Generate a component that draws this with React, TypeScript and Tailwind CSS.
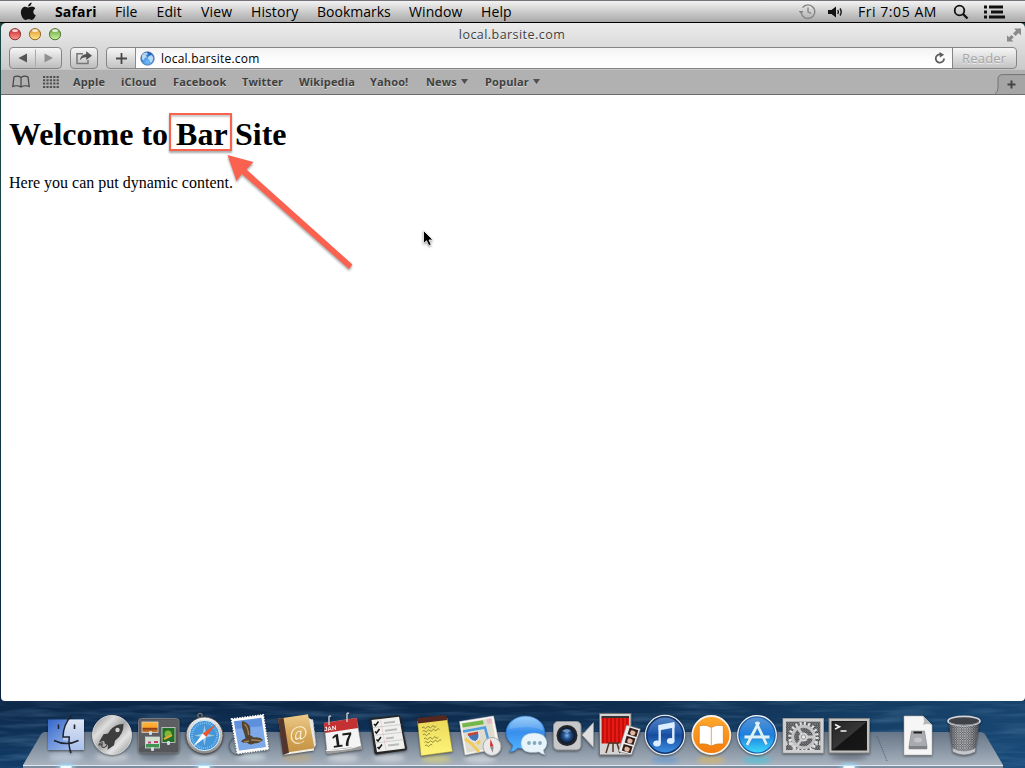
import type { ReactNode } from "react";

const MENUS: { label: string; cls: string }[] = [
  { label: "Safari", cls: "w-[60px] font-bold tracking-[0.15px]" },
  { label: "File", cls: "w-[41.5px] tracking-[0.1px]" },
  { label: "Edit", cls: "w-[44.5px] tracking-[0.1px]" },
  { label: "View", cls: "w-[50px] tracking-[0.2px]" },
  { label: "History", cls: "w-[66px] tracking-[0.1px]" },
  { label: "Bookmarks", cls: "w-[92px]" },
  { label: "Window", cls: "w-[72px] tracking-[0.1px]" },
  { label: "Help", cls: "w-[40px] tracking-[0.1px]" },
];

const BOOKMARKS: { label: string; cls: string; menu?: boolean }[] = [
  { label: "Apple", cls: "w-[48px]" },
  { label: "iCloud", cls: "w-[52px]" },
  { label: "Facebook", cls: "w-[69px]" },
  { label: "Twitter", cls: "w-[57px]" },
  { label: "Wikipedia", cls: "w-[71px]" },
  { label: "Yahoo!", cls: "w-[56px]" },
  { label: "News", cls: "w-[59px]", menu: true },
  { label: "Popular", cls: "w-[60px]", menu: true },
];

function MenuBar() {
  return (
    <header className="flex h-[23px] shrink-0 items-center border-t border-b border-t-[#77727a] border-b-black bg-linear-to-b from-[#f3f3f3] to-[#a9a9a9] text-[14px] leading-[20px] text-black">
      <svg className="ml-[20px] mr-[18px] h-[19px] w-[17px]" viewBox="0 0 17 19">
        <path d="M11.6 0.5c.2 1.9-1.4 4-3.5 4.1C7.900 2.700 9.700.7 11.600.5zM8.500 5.600c.7 0 1.900-1 3.500-1 1.300 0 2.500.7 3.300 1.800-2.900 1.700-2.400 5.700.5 6.900-.9 2.400-2.500 4.700-4.100 4.700-1.200 0-1.600-.7-3-.7s-1.900.7-3 .7C3.300 18 .9 14 .9 10.300c0-3.600 2.300-5.600 4.500-5.600 1.400 0 2.400.9 3.100.9z" fill="#151515" />
      </svg>
      <nav className="flex">
        {MENUS.map((m) => (
          <span key={m.label} className={m.cls}>{m.label}</span>
        ))}
      </nav>
      <div className="ml-auto flex items-center">
        <svg className="mr-[12px] size-[17px]" viewBox="0 0 17 17" fill="none" stroke="#858585" strokeWidth="1.4">
          <path d="M2.200 9.500A6.800 6.800 0 1 0 3.500 4.600M9 4.500v4.300l3 1.600" />
          <path d="M-.2 8h4.800L2.200 11z" fill="#858585" stroke="none" />
        </svg>
        <svg className="mr-[14px] h-[14px] w-[16px]" viewBox="0 0 16 14">
          <path d="M0 5h3.500L8 1.500v11L3.500 9H0z" fill="#111" />
          <path d="M9.800 5q1.200 2 0 4M12 3.500q2.400 3.500 0 7" fill="none" stroke="#111" strokeWidth="1.400" />
        </svg>
        <span className="w-[95px] tracking-[0.55px]">Fri 7:05 AM</span>
        <svg className="mr-[15px] size-[16px]" viewBox="0 0 16 16" fill="none" stroke="#111">
          <circle cx="6.500" cy="6.500" r="4.800" strokeWidth="1.800" />
          <path d="M10 10l4.500 4.500" strokeWidth="2.400" />
        </svg>
        <svg className="mr-[20px] h-[14px] w-[21px]" viewBox="0 0 21 14" fill="none" stroke="#111" strokeWidth="2.800">
          <path d="M0 2h3M5 2h14M0 7h3M7 7h12M0 12h3M5 12h16" />
        </svg>
      </div>
    </header>
  );
}

function TrafficLights() {
  const colors = [
    { rim: "#8d3230", top: "#c3242b", bottom: "#ff9a90" },
    { rim: "#96652a", top: "#df932b", bottom: "#ffe98b" },
    { rim: "#4d7635", top: "#64a440", bottom: "#ccf49b" },
  ];
  return (
    <svg className="mb-[2px] h-[14px] w-[54px]" viewBox="0 0 54 14">
      <defs>
        {colors.map((c, i) => (
          <linearGradient key={c.rim} id={`light${i}`} x2="0" y2="1">
            <stop stopColor={c.top} />
            <stop offset="1" stopColor={c.bottom} />
          </linearGradient>
        ))}
      </defs>
      {colors.map((c, i) => (
        <g key={c.rim}>
          <circle cx={7 + i * 20} cy="7.200" r="5.600" fill={`url(#light${i})`} stroke={c.rim} />
          <ellipse cx={7 + i * 20} cy="3.700" rx="3" ry="1.400" fill="#fff" opacity=".8" />
        </g>
      ))}
    </svg>
  );
}

function BrowserChrome() {
  return (
    <div className="flex h-[72px] shrink-0 flex-col rounded-t-[5px] border-b border-[#6c6c6c] bg-linear-to-b from-[#ececec] via-[#cdcdcd] via-60% to-[#adadad]">
      <div className="grid h-[24px] grid-cols-[1fr_auto_1fr] items-center pl-[7px] pr-[9px]">
        <TrafficLights />
        <span className="text-[12.500px] tracking-[0.45px] text-[#3f3f3f] [text-shadow:0_1px_0_#fff8]">local.barsite.com</span>
        <svg className="mr-[-6px] size-[16px] justify-self-end" viewBox="0 0 16 16" fill="#8a8a8a">
          <path d="M8 1.500h7v7l-2.400-2.400-3 3L7 6.500l3-3zM1 8.300l2 2 2.500-2.400 2.300 2.300L5.400 12.600l2 2H1z" />
        </svg>
      </div>
      <div className="flex h-[22px] items-stretch pr-[8px] pl-[8px]">
        <div className="flex w-[53px] items-center rounded-[4px] border border-[#858585] bg-linear-to-b from-[#f6f6f6] to-[#bdbdbd]">
          <svg className="h-[20px] w-[51px]" viewBox="0 0 51 20">
            <path d="M17 5.500v9L8.500 10z" fill="#555" />
            <path d="M34.500 5.500v9L43 10z" fill="#909090" />
            <path d="M25.500 1.500v17" stroke="#a9a9a9" />
          </svg>
        </div>
        <div className="ml-[8px] flex w-[28px] items-center justify-center rounded-[4px] border border-[#858585] bg-linear-to-b from-[#f6f6f6] to-[#bdbdbd]">
          <svg className="h-[16px] w-[18px]" viewBox="0 0 18 16">
            <path d="M8 3.700H2v9.800h11V10" fill="none" stroke="#777" strokeWidth="1.500" />
            <path d="M4.800 10.500C5.500 6 8 4.300 11.200 4.200V1.200L17 5.700l-5.800 4.400V7.200C8.500 7.100 6.500 8 4.800 10.500z" fill="#555" />
          </svg>
        </div>
        <div className="ml-[8px] flex flex-1 overflow-hidden rounded-[4px] border border-[#858585] bg-linear-to-b from-[#f6f6f6] to-[#c3c3c3]">
          <div className="flex w-[29px] items-center justify-center border-r border-[#8b8b8b]">
            <svg className="size-[11px]" viewBox="0 0 11 11"><path d="M5.500 0v11M0 5.500h11" stroke="#484848" strokeWidth="1.800" /></svg>
          </div>
          <div className="flex flex-1 items-center bg-linear-to-b from-[#f3f3f3] via-[#fdfdfd] via-60% to-white pl-[4px]">
            <svg className="size-[15px]" viewBox="0 0 15 15">
              <defs>
                <radialGradient id="globe" cx=".5" cy=".75" r=".7"><stop stopColor="#75c2ff" /><stop offset="1" stopColor="#1659b2" /></radialGradient>
              </defs>
              <circle cx="7.500" cy="7.500" r="6.800" fill="url(#globe)" stroke="#4d739f" strokeWidth=".6" />
              <path d="M2 4q2-3 5-2.500L8 3 6 4.500l1 1.700-2.500 1L4 9.500 1.800 8zM9 5l3-1 1.500 3-1 3-2 2-1-3-2-1.500z" fill="#d5edfd" opacity=".8" />
            </svg>
            <span className="ml-[6px] mt-px text-[12px] leading-[18px] tracking-[0.22px] text-black">local.barsite.com</span>
            <svg className="ml-auto mr-[6px] size-[12px]" viewBox="0 0 13 13">
              <path d="M10.900 7A4.500 4.500 0 1 1 6.800 2.600" fill="none" stroke="#5c5c5c" strokeWidth="1.900" />
              <path d="M6 0l5 3-4.700 3z" fill="#5c5c5c" />
            </svg>
          </div>
          <div className="w-[64px] border-l border-[#858585] pl-[9px] text-[13px] leading-[20px] tracking-[0.2px] text-[#a6a6a6] [text-shadow:0_1px_0_#fff9]">Reader</div>
        </div>
      </div>
      <div className="flex h-[25px] items-center border-t border-[#c6c6c6] bg-[#b1b1b1] text-[11px] font-bold leading-[16px] tracking-[0.15px] text-[#404040] [text-shadow:0_1px_0_#fff7]">
        <svg className="ml-[11px] mr-[13px] h-[14px] w-[18px]" viewBox="0 0 18 14" fill="none" stroke="#444" strokeWidth="1.200">
          <path d="M9 2.500Q5.500.2 2 2L.8 11.500Q5 9.800 9 12q4-2.200 8.200-.5L16 2q-3.500-1.800-7 .5V12" />
        </svg>
        <svg className="mr-[14px] h-[12px] w-[16px]" viewBox="0 0 16 12" stroke="#505050" strokeWidth="2">
          <path d="M0 1h16M0 4.300h16M0 7.600h16M0 10.900h16" strokeDasharray="2.200 1.200" />
        </svg>
        {BOOKMARKS.map((b) => (
          <span key={b.label} className={`flex items-center ${b.cls}`}>
            {b.label}
            {b.menu && <svg className="ml-[4px] mb-px h-[5px] w-[7px]" viewBox="0 0 7 5"><path d="M0 0h7L3.500 5z" fill="#505050" /></svg>}
          </span>
        ))}
        <svg className="ml-auto h-[20px] w-[31px] self-end" viewBox="0 0 31 20">
          <path d="M1 19.500Q4 18 4 14V5Q4 .6 9 .6H31V20H1z" fill="#a5a5a5" />
          <path d="M1 19.500Q4 18 4 14V5Q4 .6 9 .6H31" fill="none" stroke="#747474" />
          <path d="M17.500 6.500v8M13.500 10.500h8" stroke="#444" strokeWidth="2" />
        </svg>
      </div>
    </div>
  );
}

function Page() {
  return (
    <main className="relative flex-1 rounded-b-[4px] bg-white pl-[8px] pt-[21px] text-black [font-family:'Liberation_Serif','Times_New_Roman',serif]">
      <h1 className="text-[32px] font-bold leading-[37px]">Welcome to Bar Site</h1>
      <p className="mt-[21px] text-[16px] leading-[18px]">Here you can put dynamic content.</p>
      <div className="absolute left-[168px] top-[18px] h-[38px] w-[63px] border-2 border-[#f86350] shadow-[0_2px_2px_#0005,inset_0_2px_2px_#0003]" />
      <svg className="absolute left-[219px] top-[51px] h-[135px] w-[145px] drop-shadow-[0_2px_1px_#0005]" viewBox="220 146 145 135">
        <path d="M227.500 155l26 7-7 7.500 106 95-3.500 4.500-107-95-5.500 7z" fill="#fa614f" />
      </svg>
      <svg className="absolute left-[421px] top-[134px] h-[20px] w-[14px] drop-shadow-[0_1px_1px_#0006]" viewBox="0 0 14 20">
        <path d="M1.500 1.500v13l3-2.800 2.300 5 2.400-1.100L7 11h4z" fill="#000" stroke="#fff" strokeWidth=".8" />
      </svg>
    </main>
  );
}

function Cell({ children }: { children: ReactNode }) {
  return <svg className="h-[46px] w-[46px] shrink-0 overflow-visible drop-shadow-[0_1px_1px_#0007]" viewBox="0 0 46 46">{children}</svg>;
}

function Gradients() {
  return (
    <svg className="absolute size-0">
      <defs>
        <linearGradient id="finder" x2="1" y2="1"><stop stopColor="#3567c9" /><stop offset="1" stopColor="#b7cdf5" /></linearGradient>
        <linearGradient id="finderR" x2="0" y2="1"><stop stopColor="#dfe5f3" /><stop offset="1" stopColor="#a9c0ec" /></linearGradient>
        <linearGradient id="silver" x2="1" y2="1"><stop stopColor="#7c7c7c" /><stop offset=".3" stopColor="#dedede" /><stop offset=".5" stopColor="#a5a5a5" /><stop offset=".7" stopColor="#e3e3e3" /><stop offset="1" stopColor="#888" /></linearGradient>
        <linearGradient id="chrome" x2="0" y2="1"><stop stopColor="#f4f4f4" /><stop offset="1" stopColor="#898989" /></linearGradient>
        <linearGradient id="blue" x2="0" y2="1"><stop stopColor="#5a87c4" /><stop offset=".45" stopColor="#1f58ac" /><stop offset=".5" stopColor="#164a9c" /><stop offset="1" stopColor="#3f97ec" /></linearGradient>
        <linearGradient id="store" x2="0" y2="1"><stop stopColor="#5d94d0" /><stop offset=".5" stopColor="#1b7fdf" /><stop offset="1" stopColor="#3fe0ff" /></linearGradient>
        <linearGradient id="orange" x2="0" y2="1"><stop stopColor="#ffa92d" /><stop offset="1" stopColor="#f37b0c" /></linearGradient>
        <linearGradient id="bubble" x2="0" y2="1"><stop stopColor="#8bc7fc" /><stop offset=".45" stopColor="#388eec" /><stop offset="1" stopColor="#56b6ff" /></linearGradient>
        <linearGradient id="tan" x2="0" y2="1"><stop stopColor="#eccb8b" /><stop offset=".5" stopColor="#d7a95a" /><stop offset="1" stopColor="#c39245" /></linearGradient>
        <linearGradient id="yellow" x2="0" y2="1"><stop stopColor="#ead857" /><stop offset="1" stopColor="#fff57b" /></linearGradient>
        <linearGradient id="red" x2="2" y2="0" gradientUnits="userSpaceOnUse" spreadMethod="reflect"><stop stopColor="#b90505" /><stop offset="1" stopColor="#f2241c" /></linearGradient>
        <linearGradient id="sunset" x2="0" y2="1"><stop stopColor="#fbb638" /><stop offset=".5" stopColor="#ffa52a" /><stop offset=".6" stopColor="#8c3d15" /><stop offset="1" stopColor="#d38431" /></linearGradient>
        <linearGradient id="screen" x2="1" y2="1"><stop stopColor="#242424" /><stop offset=".5" stopColor="#363636" /><stop offset=".52" stopColor="#141414" /><stop offset="1" stopColor="#181818" /></linearGradient>
        <linearGradient id="basket" x2="1" y2="0"><stop stopColor="#17191d" stopOpacity=".6" /><stop offset=".45" stopColor="#fff" stopOpacity=".15" /><stop offset="1" stopColor="#17191d" stopOpacity=".6" /></linearGradient>
        <radialGradient id="lens"><stop stopColor="#81b6ec" /><stop offset=".45" stopColor="#24528e" /><stop offset="1" stopColor="#0a172d" /></radialGradient>
        <pattern id="mesh" width="2.400" height="2.400" patternUnits="userSpaceOnUse"><rect width="2.400" height="2.400" fill="#3b3d40" /><path d="M0 0l2.400 2.400M2.400 0L0 2.400" stroke="#b4b7bb" strokeWidth=".65" /></pattern>
        <clipPath id="panel"><rect x="7" y="9.500" width="34.500" height="28.500" /></clipPath>
      </defs>
    </svg>
  );
}

function Finder() {
  return (
    <Cell>
      <rect x="5" y="7.500" width="36" height="30.500" fill="url(#finder)" />
      <path d="M25 7.500h16v30.500H26.500q-1-4-.8-9.500H20q0-13 5-21z" fill="url(#finderR)" />
      <path d="M28.500 3.500Q20 13 20 25h6.200q-.8 10 1.800 16" fill="none" stroke="#20242f" strokeWidth="1.500" />
      <path d="M11 28.500q12.500 6 24.500 0" fill="none" stroke="#20242f" strokeWidth="1.500" />
      <path d="M15.500 12.500v4.500M31.500 12.500v4.500" stroke="#20242f" strokeWidth="1.600" />
    </Cell>
  );
}

function Launchpad() {
  return (
    <Cell>
      <circle cx="23" cy="23" r="19.500" fill="url(#silver)" stroke="#d7d7d7" />
      <path d="M34.500 12q-8-.5-13.500 6.500l-2 3-4.500.8-4.500 8 5-1.500 1 3 3 1.500-.5 4.500 6.500-4.500 1-4.500Q35 22 34.500 12z" fill="#3e3e3e" />
      <circle cx="28.500" cy="18" r="2.200" fill="#d0d0d0" />
      <path d="M14 31q-4-.5-4 2l3-.5q-1 3 2 3 2-.5 3-2.500" fill="none" stroke="#444" strokeWidth="1.200" />
    </Cell>
  );
}

function MissionControl() {
  return (
    <Cell>
      <rect x="3.500" y="6.500" width="40.500" height="34.500" rx="3" fill="#55565a" stroke="#77787c" />
      <path d="M4 8h39v8L4 36z" fill="#fff" opacity=".05" />
      <g stroke="#d3d3d3" strokeWidth=".8">
        <rect x="7" y="10" width="16" height="10.500" fill="url(#sunset)" />
        <rect x="27" y="15.500" width="13" height="15" fill="#236f27" />
        <rect x="10.500" y="25" width="14" height="11" fill="#cfe0cc" />
      </g>
      <circle cx="33" cy="22" r="3.500" fill="#82b839" />
      <path d="M29 27l8-4" stroke="#e5a735" strokeWidth="2" />
      <path d="M11 32h13v3.500H11z" fill="#3c9551" />
      <path d="M13 30.500h3M19 30h4" stroke="#c03c83" strokeWidth="1.800" fill="none" />
      <g fill="#ccdde9"><rect x="14" y="19" width="3" height="4" rx="1" /><rect x="32" y="29" width="3" height="4" rx="1" /><rect x="16" y="35" width="3" height="4" rx="1" /></g>
    </Cell>
  );
}

function SafariIcon() {
  return (
    <Cell>
      <circle cx="19" cy="3.500" r="2.200" fill="none" stroke="#777" strokeWidth="1.200" />
      <circle cx="23.500" cy="23.500" r="18.500" fill="url(#chrome)" stroke="#4d4d4d" strokeWidth=".9" />
      <circle cx="23.500" cy="23.500" r="15.200" fill="#4397da" stroke="#e6eef4" />
      <circle cx="23.500" cy="23.500" r="12.500" fill="none" stroke="#cceaff" strokeWidth="2" strokeDasharray=".5 1.500" opacity=".8" />
      <path d="M23.500 12l2 9.500L35 23.500l-9.500 2L23.500 35l-2-9.500L12 23.500l9.500-2z" fill="#9fcdf0" stroke="#3d7fad" strokeWidth=".4" />
      <path d="M35 12L21.700 21.500l3.400 3.500z" fill="#ed5628" />
      <path d="M12 34.500l13-9.500-3.300-3.500z" fill="#fff" />
    </Cell>
  );
}

function Mail() {
  return (
    <Cell>
      <circle cx="11" cy="34" r="9" fill="none" stroke="#28384d" strokeWidth="1.500" opacity=".35" />
      <path d="M4.500 7L36.300 2.800 41.500 37.200 10.400 41.600z" fill="#fbfbfb" stroke="#fff" strokeWidth="1.600" strokeDasharray="1.400 1.200" />
      <path d="M6.800 9.300l27.700-3.600 4.300 29.200-26.700 3.700z" fill="#5f90de" />
      <path d="M8 17l28-3 2.800 21-26.700 3.600z" fill="#9cc2f2" opacity=".5" />
      <path d="M15 9q5 1 7.500 5 1.500 5 .5 9l4 2.500q6-1 9 2.500-4 3.500-9 3.500-4 2.500-7-1-3 1-6-1 1-2 4.500-3-.5-3-2-7-2-4-1.500-10.500z" fill="#54442f" />
      <path d="M17.500 12q4 4 4 11M24 28q5 0 10 .8M17 30l5-1" stroke="#a0835c" strokeWidth="1.300" fill="none" />
    </Cell>
  );
}

function Contacts() {
  return (
    <Cell>
      <path d="M35 6l5 2 3 25-3 4z" fill="#e6e6e6" stroke="#bbb" strokeDasharray="2 2" />
      <path d="M10 43l31-4.500v-2.500L11 39z" fill="#f3f0e7" />
      <path d="M5 6.800L35 2.300l6.500 34L11 41z" fill="url(#tan)" />
      <path d="M5 6.800l5.500-1 5.500 35-6 2.200z" fill="#55362f" />
      <text x="25.500" y="28" textAnchor="middle" transform="rotate(-6 24 22)" fill="#f9edd0" fontSize="20" className="[font-family:'Liberation_Serif',serif]">@</text>
    </Cell>
  );
}

function CalendarIcon() {
  return (
    <Cell>
      <path d="M5 11L37.500 6 43 37 8 42z" fill="#f4f4f4" stroke="#777" strokeWidth=".6" />
      <path d="M5 11L37.500 6l1.600 10L6 21z" fill="#c43132" />
      <path d="M7 38.500l35-4.500.8 3L8 42z" fill="#9b9b9b" />
      <path d="M7 38.500q18-.5 28-3l6-2.500" stroke="#fff" fill="none" />
      <g className="[font-family:'Liberation_Sans',sans-serif]" fontWeight="700" transform="rotate(-8 23 25)">
        <text x="6.500" y="17" fill="#fff" fontSize="6">JAN</text>
        <text x="23" y="34.500" textAnchor="middle" fontSize="19" fill="#1c1c1c">17</text>
      </g>
      <path d="M10 13V5q0-1.500 2-.5M28 10V2q0-1.500 2-.5" fill="none" stroke="#c4c7cb" strokeWidth="1.500" />
    </Cell>
  );
}

function Reminders() {
  return (
    <Cell>
      <path d="M5 8q0-1.500 2-1.800l26-3q2 0 2.300 2L42 36q.3 2-2 2.500l-28 4q-2 .3-2.500-1.500z" fill="#252525" />
      <path d="M6.500 8l27.500-3.300L40 36.500l-28 3.500z" fill="#f0f0ee" />
      <path d="M8 15.500l28-3M9.500 23.300l27.500-3M10.500 31l28-3.500" stroke="#c4c4c4" strokeWidth=".8" />
      <path d="M15.500 7l5.500 31" stroke="#e7b3b3" strokeWidth=".5" />
      <path d="M9 12l1.500 1.500 3-4M10 19.500l1.500 1.500 3-4M11.500 27.500l1.500 1.500 3-4M12.500 35l1.500 1.500 3-4" fill="none" stroke="#161616" strokeWidth="1.500" />
      <path d="M19 11l11-1.300M20 18.700l12-1.400M21 26.500l8-1M23 33.500l11-1.300" stroke="#bbb" strokeWidth="2" />
    </Cell>
  );
}

function Notes() {
  return (
    <Cell>
      <path d="M6.500 9L36 6l5.500 33.500L10 43.800z" fill="url(#yellow)" stroke="#9e9639" strokeWidth=".5" />
      <path d="M6 6l29-3 1.300 5L7 11.500z" fill="#54281f" />
      <g fill="none" stroke="#625e2c" strokeWidth=".7">
        <path d="M11 16q1.200-2 2.400-.3t2.400-.3 2.400-.3 2.400-.3 2.400-.3 2.400-.3M11.600 19.500q1.200-2 2.400-.3t2.400-.3 2.400-.3 2.400-.3 2.400-.3 2.400-.3 2.400-.3M12 23q1.200-2 2.400-.3t2.400-.3 2.400-.3M13 27q1.200-2 2.400-.3t2.400-.3 2.400-.3 2.400-.3 2.400-.3 2.400-.3M13.500 30.500q1.200-2 2.400-.3t2.400-.3 2.400-.3 2.400-.3 2.400-.3 2.400-.3 2.400-.3M14 34q1.200-2 2.400-.3t2.400-.3 2.400-.3" />
      </g>
    </Cell>
  );
}

function Maps() {
  return (
    <Cell>
      <path d="M2.500 9.500L36.500 4 43 36 8 43z" fill="#f7f7f3" stroke="#ccc" strokeWidth=".5" />
      <path d="M4.500 11l30-4.700L40 35 9.700 41z" fill="#e0dccd" />
      <path d="M5 11.500l21-3.300.7 4L5.700 15.500z" fill="#72b74a" />
      <path d="M29.500 7l5-.7 1 5-5 .7z" fill="#e7b8c6" />
      <path d="M6 19.500l22-4 5 19" fill="none" stroke="#4b9de0" strokeWidth="2.500" />
      <path d="M8 27l7 5 7 8M20 32l3-3" stroke="#f2cb56" strokeWidth="3" fill="none" />
      <path d="M10.500 22l10.500-2q3 6-2.500 9.500-6.500-1-8-7.500z" fill="#4675b7" stroke="#fff" strokeWidth=".8" />
      <path d="M10.500 21.500l10.500-2 .2 2.500-10.200 2z" fill="#c64535" />
      <circle cx="35" cy="34.500" r="9" fill="#e9e9e9" stroke="#a9a9a9" />
      <path d="M33.500 27l3 7.500h-3.500z" fill="#d42b25" /><path d="M33 34.500h3.500l-.7 6.500z" fill="#888" />
    </Cell>
  );
}

function Messages() {
  return (
    <Cell>
      <path d="M22.500 4C33 4 42 11 42 20.500S33 37 22 37q-4 0-7-1-4 4.500-9 4 4-3 3.500-7Q3 28 3 20.500C3 11 12 4 22.500 4z" fill="url(#bubble)" stroke="#286cb8" strokeWidth=".6" />
      <path d="M6 17Q9 5 23 5q15 0 17 14-10-7-34-2z" fill="#fff" opacity=".15" />
      <path d="M31 21q12 0 13 10-.5 5-3.500 7 0 3 2 4.500-4 0-6.500-2.500-18 3-18-9 1-10 13-10z" fill="#e9f4fa" stroke="#94b9cf" strokeWidth=".5" />
      <g fill="#86a9be"><circle cx="26" cy="31" r="1.900" /><circle cx="31.500" cy="31" r="1.900" /><circle cx="37" cy="31" r="1.900" /></g>
    </Cell>
  );
}

function FaceTime() {
  return (
    <Cell>
      <rect x="4.500" y="9.500" width="27.500" height="28.500" rx="4.500" fill="#c6c8ca" stroke="#8f9194" />
      <path d="M44.500 10.500v25L33 23z" fill="#dedede" stroke="#999" strokeWidth=".8" />
      <circle cx="18" cy="23.500" r="10.500" fill="#22252a" /><circle cx="18" cy="23.500" r="8" fill="url(#lens)" />
      <path d="M13 19q5-4 9 0l-4 2z" fill="#aacdf2" opacity=".6" />
    </Cell>
  );
}

function PhotoBooth() {
  return (
    <Cell>
      <rect x="4.500" y="1.500" width="31.500" height="41.500" fill="#d4d4d4" stroke="#737373" />
      <rect x="6.500" y="4" width="27.500" height="3" fill="#333" />
      <rect x="6.500" y="6" width="27.500" height="25.500" fill="url(#red)" />
      <path d="M13 31h11M14 31l-3 10M22 31l3 10M18 31v9" stroke="#553627" strokeWidth="1.500" />
      <path d="M31.500 13l14 4-9 26-13-3.500z" fill="#ececec" stroke="#777" strokeWidth=".6" />
      {[0, 1, 2].map((i) => (
        <g key={i} transform={`translate(${38 - i * 2.900} ${20 + i * 8.200}) rotate(17)`}>
          <rect x="-4.600" y="-3.300" width="9.200" height="7" fill="#34211d" /><ellipse rx="2.600" ry="2.900" cy=".5" fill="#e0b5a2" /><path d="M-3-2q3-1.500 6 0l-1 1q-2-1-5 0z" fill="#281714" />
        </g>
      ))}
    </Cell>
  );
}

function ITunes() {
  return (
    <Cell>
      <circle cx="24" cy="23" r="19.500" fill="url(#blue)" stroke="#e3e8ed" strokeWidth="1.400" />
      <circle cx="24" cy="23" r="18.200" fill="none" stroke="#163468" strokeWidth="1.400" />
      <path d="M17.500 13L33.500 10v5.500L17.500 18.500z" fill="#dceeff" />
      <path d="M18.700 13v18M32.300 12v17" fill="none" stroke="#dceeff" strokeWidth="2.400" />
      <ellipse cx="16" cy="31.500" rx="3.800" ry="3" fill="#dceeff" /><ellipse cx="29.700" cy="29" rx="3.800" ry="3" fill="#dceeff" />
    </Cell>
  );
}

function IBooks() {
  return (
    <Cell>
      <circle cx="24.300" cy="23" r="19" fill="url(#orange)" stroke="#f7f1e8" strokeWidth="1.800" />
      <path d="M24.300 15.500q-5-3.500-12-1.800V32q7-1 12 2 5.300-3 12-2V13.700q-7-1.700-12 1.800z" fill="#fff" stroke="#cb710e" strokeWidth=".6" />
      <path d="M24.300 16v18" stroke="#df9237" strokeWidth=".8" />
    </Cell>
  );
}

function AppStore() {
  return (
    <Cell>
      <circle cx="24" cy="23" r="19.200" fill="url(#store)" stroke="#f0f4f7" strokeWidth="1.500" />
      <circle cx="24" cy="23" r="18" fill="none" stroke="#255ea5" strokeWidth="1.200" />
      <path d="M23 10l10.500 22.500M26 10L14 33M11.500 25h25" stroke="#3e83bb" strokeWidth="4" />
      <path d="M23 10l10.500 22.500M26 10L14 33M11.500 25h25" stroke="#dcf2fb" strokeWidth="2.800" />
    </Cell>
  );
}

function Preferences() {
  return (
    <Cell>
      <rect x="4" y="6.500" width="40.500" height="34.500" fill="#c8c8c8" stroke="#919191" />
      <g clipPath="url(#panel)">
        <rect x="7" y="9.500" width="34.500" height="28.500" fill="#4c4d50" />
        <rect x="7" y="9.500" width="34.500" height="28.500" fill="url(#mesh)" opacity=".6" />
        <circle cx="9.500" cy="37" r="6" fill="none" stroke="#d0d0d0" strokeWidth="4" strokeDasharray="2.500 1.500" />
        <circle cx="39.500" cy="37" r="6" fill="none" stroke="#d0d0d0" strokeWidth="4" strokeDasharray="2.500 1.500" />
        <circle cx="24.500" cy="25" r="13.500" fill="none" stroke="#e2e2e2" strokeWidth="3.500" strokeDasharray="2 2.240" />
        <circle cx="24.500" cy="25" r="10.800" fill="none" stroke="#c2c2c2" strokeWidth="3" />
        <path d="M24.500 25l-6-10M24.500 25l-7 9M24.500 25H36" stroke="#c9c9c9" strokeWidth="2.800" />
        <circle cx="24.500" cy="25" r="4.600" fill="#d4d4d4" /><circle cx="24.500" cy="25" r="2.200" fill="#e8e8e8" stroke="#888" strokeWidth=".8" />
      </g>
      <rect x="5.500" y="8" width="37.500" height="31.500" fill="none" stroke="#d0d0d0" strokeWidth="2.400" />
    </Cell>
  );
}

function TerminalIcon() {
  return (
    <Cell>
      <rect x="4" y="6.500" width="40.500" height="34.500" fill="#c1c1bd" stroke="#858585" />
      <rect x="7" y="9.500" width="34.500" height="28.500" fill="url(#screen)" stroke="#1b1b1b" />
      <path d="M10 12.500l4.500 2.300-4.500 2.300M15.500 19h6" fill="none" stroke="#f5f5f5" strokeWidth="1.600" />
    </Cell>
  );
}

function DiskDocument() {
  return (
    <Cell>
      <path d="M9 4h19l9 9v30H9z" fill="#f6f6f6" stroke="#b3b3b3" strokeWidth=".6" />
      <path d="M28 4q2 5 0 9 5-2 9 0z" fill="#b5b8bb" />
      <path d="M16.500 19h13l2.500 15v3H14v-3z" fill="#a9abb0" stroke="#717376" strokeWidth=".5" />
      <path d="M14 34h18v3H14z" fill="#7e8186" />
      <rect x="18.500" y="19.500" width="8.500" height="2" fill="#222" /><ellipse cx="23" cy="28" rx="4" ry="2.500" fill="#c2c4c9" />
    </Cell>
  );
}

function Trash() {
  return (
    <Cell>
      <path d="M7.500 9l4.200 30q11.300 7 22.600 0l4.200-30z" fill="url(#mesh)" />
      <path d="M7.500 9l4.200 30q11.300 7 22.600 0l4.200-30z" fill="url(#basket)" />
      <path d="M11.300 36q11.700 6 23.400 0l-.6 4q-11 6-22.200 0z" fill="#c6c7cc" stroke="#73767b" strokeWidth=".6" />
      <ellipse cx="23" cy="9" rx="16" ry="4.600" fill="#3f4247" stroke="#d3d4da" strokeWidth="1.800" />
      <path d="M8 10.500q15 6 30 0" fill="none" stroke="#75787f" strokeWidth=".8" />
    </Cell>
  );
}

function Dock() {
  return (
    <footer className="relative flex h-[67px] shrink-0 pl-[43px] pt-[11px]">
      <svg className="absolute inset-0 h-[67px] w-[1025px]" viewBox="0 701 1025 67">
        <defs>
          <linearGradient id="sea" x2="0" y2="1"><stop stopColor="#0c2747" /><stop offset="1" stopColor="#123c68" /></linearGradient>
          <linearGradient id="seaRight" x2="1" y2="0"><stop offset=".5" stopColor="#24597f" stopOpacity="0" /><stop offset="1" stopColor="#1f5687" stopOpacity=".6" /></linearGradient>
          <linearGradient id="shelf" x2="0" y2="1"><stop stopColor="#667588" /><stop offset=".5" stopColor="#8693a1" /><stop offset="1" stopColor="#a9b3bf" /></linearGradient>
          <filter id="soft" x="-50%" y="-50%" width="200%" height="200%"><feGaussianBlur stdDeviation="2" /></filter>
          <filter id="waves" x="0" y="0" width="100%" height="100%">
            <feTurbulence type="fractalNoise" baseFrequency=".015 .16" numOctaves="3" seed="4" />
            <feColorMatrix values="0 0 0 0 .2  0 0 0 0 .4  0 0 0 0 .6  1.600 0 0 0 -.7" />
          </filter>
        </defs>
        <path d="M0 701H1025V768H0z" fill="url(#sea)" />
        <path d="M0 701H1025V768H0z" fill="url(#seaRight)" />
        <rect y="701" width="1025" height="67" filter="url(#waves)" opacity=".4" />
        <path d="M45 732H980q4 0 6 4l17 29H23l17-29q2-4 5-4z" fill="url(#shelf)" />
        <g filter="url(#soft)" opacity=".4">
          <ellipse cx="66" cy="757" rx="17" ry="5" fill="#dfeafd" />
          <ellipse cx="112" cy="757" rx="17" ry="5" fill="#eee" />
          <ellipse cx="158" cy="757" rx="18" ry="4" fill="#4d5664" />
          <ellipse cx="204" cy="758" rx="14" ry="4" fill="#deecf5" />
          <ellipse cx="251" cy="757" rx="15" ry="4" fill="#eff" />
          <ellipse cx="297" cy="758" rx="15" ry="4" fill="#d6aa5d" />
          <ellipse cx="343" cy="758" rx="16" ry="4" fill="#fff" />
          <ellipse cx="389" cy="758" rx="16" ry="4" fill="#fff" />
          <ellipse cx="436" cy="759" rx="15" ry="4" fill="#ffeb4f" />
          <ellipse cx="480" cy="759" rx="16" ry="4" fill="#fff" />
          <ellipse cx="665" cy="760" rx="14" ry="4" fill="#468fda" />
          <ellipse cx="711" cy="760" rx="14" ry="4" fill="#ffbf38" />
          <ellipse cx="757" cy="760" rx="14" ry="4" fill="#19d2f5" />
          <ellipse cx="849" cy="757" rx="18" ry="3" fill="#333b45" />
        </g>
        <path d="M23 765H1003v1.500H23z" fill="#e0e7ee" />
        <path d="M23 766.500H1003V768H23z" fill="#7d8c9b" />
        <path d="M877 736l10 25" stroke="#4b5967" strokeDasharray="1 1" />
        {[66, 204, 849].map((x) => (
          <g key={x}><ellipse cx={x} cy="767" rx="9" ry="3" fill="#9dddff" filter="url(#soft)" /><rect x={x - 5.500} y="766" width="11" height="2" fill="#f6fdff" /></g>
        ))}
      </svg>
      <div className="relative flex h-[46px]">
        <Finder /><Launchpad /><MissionControl /><SafariIcon /><Mail /><Contacts /><CalendarIcon /><Reminders /><Notes />
        <Maps /><Messages /><FaceTime /><PhotoBooth /><ITunes /><IBooks /><AppStore /><Preferences /><TerminalIcon />
        <div className="w-[24px]" />
        <DiskDocument /><Trash />
      </div>
    </footer>
  );
}

export default function App() {
  return (
    <div className="flex h-[768px] w-[1025px] flex-col overflow-hidden bg-linear-to-b from-[#184745] from-20% via-[#092543] via-90% to-[#0a2342] [font-family:'Open_Sans','Noto_Sans',sans-serif]">
      <Gradients />
      <MenuBar />
      <div className="ml-px flex h-[678px] shrink-0 flex-col">
        <BrowserChrome />
        <Page />
      </div>
      <Dock />
    </div>
  );
}
